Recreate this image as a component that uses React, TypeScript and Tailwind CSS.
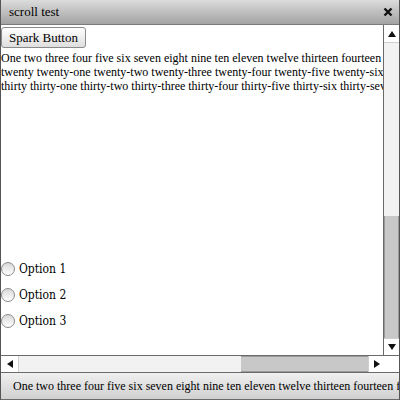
import React from 'react';

const serif = { fontFamily: '"Liberation Serif", "Times New Roman", serif' };

const lines = [
  'One two three four five six seven eight nine ten eleven twelve thirteen fourteen fifteen sixteen seventeen eighteen nineteen',
  'twenty twenty-one twenty-two twenty-three twenty-four twenty-five twenty-six twenty-seven twenty-eight twenty-nine',
  'thirty thirty-one thirty-two thirty-three thirty-four thirty-five thirty-six thirty-seven thirty-eight thirty-nine',
];

const Arrow: React.FC<{ dir: 'up' | 'down' | 'left' | 'right' }> = ({ dir }) => {
  const pts = {
    up: '0,7 4,1 8,7',
    down: '0,1 4,7 8,1',
    left: '7,0 1,4 7,8',
    right: '1,0 7,4 1,8',
  }[dir];
  return (
    <svg width="8" height="8" viewBox="0 0 8 8">
      <polygon points={pts} fill="#111" />
    </svg>
  );
};

const Radio: React.FC<{ label: string }> = ({ label }) => (
  <div className="flex items-center h-[26px]">
    <span className="w-[14px] h-[14px] rounded-full border border-[#8a8a8a] bg-gradient-to-b from-[#d9d9d9] to-white" />
    <span
      className="ml-[4px] text-[12px] text-black font-stretch-condensed"
      style={{ fontFamily: '"DejaVu Serif Condensed", "DejaVu Serif", serif' }}
    >
      {label}
    </span>
  </div>
);

export default function App() {
  return (
    <div className="w-[400px] h-[400px] flex flex-col bg-white border-l border-r border-[#555] overflow-hidden" style={serif}>
      {/* Title bar */}
      <div className="h-[25px] shrink-0 flex items-center justify-between pl-[8px] pr-[6px] bg-gradient-to-b from-[#dcdcdc] to-[#a3a3a3] border-b border-[#7a7a7a]">
        <span className="text-[13px] text-black">scroll test</span>
        <svg width="10" height="10" viewBox="0 0 10 10">
          <path d="M1.5 1.5 L8.5 8.5 M8.5 1.5 L1.5 8.5" stroke="#111" strokeWidth="2.4" />
        </svg>
      </div>

      {/* Body */}
      <div className="flex flex-1 min-h-0">
        <div className="flex-1 min-w-0 overflow-hidden flex flex-col">
          <div>
            <button className="h-[21px] px-[7px] text-[13px] text-black rounded-[3px] border border-[#8a8a8a] bg-gradient-to-b from-white to-[#dedede]">
              Spark Button
            </button>
          </div>
          <div className="mt-[2px] text-[12px] leading-[14px] text-black whitespace-nowrap">
            {lines.map((l) => (
              <div key={l}>{l}</div>
            ))}
          </div>
          <div className="mt-[163px] flex flex-col">
            <Radio label="Option 1" />
            <Radio label="Option 2" />
            <Radio label="Option 3" />
          </div>
        </div>

        {/* Vertical scrollbar */}
        <div className="w-[16px] shrink-0 flex flex-col border-l border-[#6a6a6a] bg-[#f2f2f2]">
          <div className="h-[18px] flex items-center justify-center bg-white border-b border-[#cfcfcf]">
            <Arrow dir="up" />
          </div>
          <div className="flex-1" />
          <div className="h-[122px] bg-[#c8c8c8] border-l border-r border-[#9a9a9a]" />
          <div className="h-[17px] flex items-center justify-center bg-white border-t border-[#cfcfcf]">
            <Arrow dir="down" />
          </div>
        </div>
      </div>

      {/* Horizontal scrollbar */}
      <div className="h-[17px] shrink-0 flex border-t border-[#6a6a6a]">
        <div className="w-[383px] flex bg-[#f2f2f2]">
          <div className="w-[18px] flex items-center justify-center bg-white border-r border-[#cfcfcf]">
            <Arrow dir="left" />
          </div>
          <div className="flex-1" />
          <div className="w-[127px] bg-[#c8c8c8] border-t border-b border-[#9a9a9a]" />
          <div className="w-[16px] flex items-center justify-center bg-white border-l border-[#cfcfcf]">
            <Arrow dir="right" />
          </div>
        </div>
        <div className="flex-1 bg-white" />
      </div>

      {/* Status bar */}
      <div className="h-[28px] shrink-0 flex items-center pl-[12px] bg-gradient-to-b from-[#f0f0f0] to-[#d0d0d0] border-t border-[#6a6a6a] border-b whitespace-nowrap overflow-hidden">
        <span className="text-[12px] text-black">
          One two three four five six seven eight nine ten eleven twelve thirteen fourteen fifteen sixteen seventeen
        </span>
      </div>
    </div>
  );
}
